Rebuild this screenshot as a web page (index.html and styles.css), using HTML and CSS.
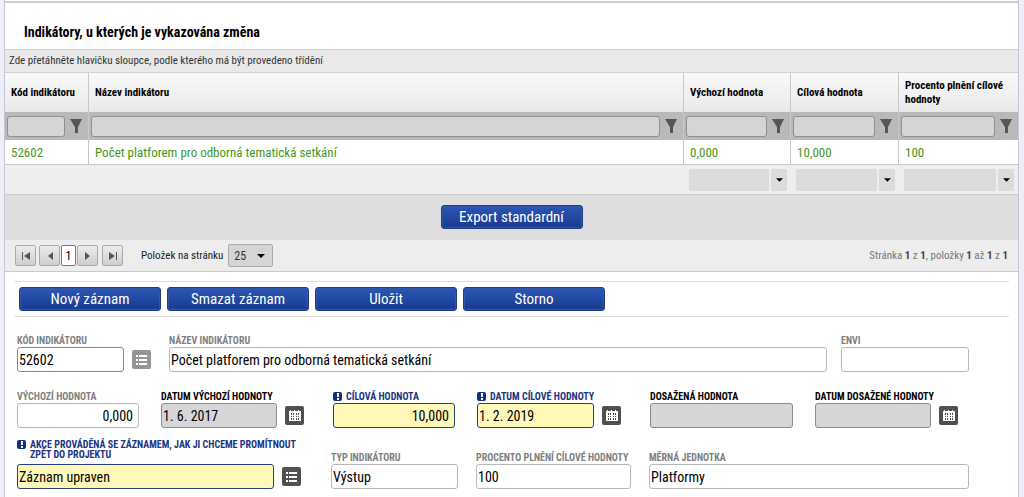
FILE: index.html
```html
<!DOCTYPE html>
<html lang="cs">
<head>
<meta charset="utf-8">
<meta name="viewport" content="width=device-width, initial-scale=1">
<title>Indikátory</title>
<link rel="stylesheet" href="styles.css">
</head>
<body>
<svg class="sprite" aria-hidden="true">
  <symbol id="funnel" viewBox="0 0 12 14"><path d="M0 0h12L8 8v6H5V8z"/></symbol>
  <symbol id="caret" viewBox="0 0 8 4"><path d="M0 0h8L4 4z"/></symbol>
  <symbol id="list" viewBox="0 0 19 19"><path d="M4 5h2v2H4zM4 9h2v2H4zM4 13h2v2H4zM7 5h8v2H7zM7 9h8v2H7zM7 13h8v2H7z"/></symbol>
  <symbol id="calendar" viewBox="0 0 19 19"><path fill-rule="evenodd" d="M4 5h1V4h1v1h3V4h1v1h3V4h1v1h2v10H4zM6 7v2h1V7zM8 7v2h1V7zM11 7v2h1V7zM13 7v2h1V7zM6 10v1h1v-1zM8 10v1h1v-1zM11 10v1h1v-1zM13 10v1h1v-1zM6 12v2h1v-2zM8 12v2h1v-2zM11 12v2h1v-2zM13 12v2h1v-2z"/></symbol>
  <symbol id="required" viewBox="0 0 9 9"><rect width="9" height="9" rx="2" fill="#142f80"/><path d="M4 1h2v4H4zM4 6h2v2H4z" fill="#fff"/></symbol>
</svg>
<main class="panel">
  <h1 class="title">Indikátory, u kterých je vykazována změna</h1>
  <div class="group-bar">Zde přetáhněte hlavičku sloupce, podle kterého má být provedeno třídění</div>
  <table class="grid">
    <colgroup><col class="col-code"><col><col class="col-base"><col class="col-target"><col class="col-percent"></colgroup>
    <thead>
      <tr class="head">
        <th scope="col">Kód indikátoru</th><th scope="col">Název indikátoru</th><th scope="col">Výchozí hodnota</th><th scope="col">Cílová hodnota</th><th scope="col">Procento plnění cílové hodnoty</th>
      </tr>
      <tr class="filters">
        <td><div class="filter"><input aria-label="Filtr: Kód indikátoru"><button aria-label="Filtrovat"><svg><use href="#funnel"/></svg></button></div></td>
        <td><div class="filter"><input aria-label="Filtr: Název indikátoru"><button aria-label="Filtrovat"><svg><use href="#funnel"/></svg></button></div></td>
        <td><div class="filter"><input aria-label="Filtr: Výchozí hodnota"><button aria-label="Filtrovat"><svg><use href="#funnel"/></svg></button></div></td>
        <td><div class="filter"><input aria-label="Filtr: Cílová hodnota"><button aria-label="Filtrovat"><svg><use href="#funnel"/></svg></button></div></td>
        <td><div class="filter"><input aria-label="Filtr: Procento plnění"><button aria-label="Filtrovat"><svg><use href="#funnel"/></svg></button></div></td>
      </tr>
    </thead>
    <tbody>
      <tr class="record"><td>52602</td><td>Počet platforem pro odborná tematická setkání</td><td>0,000</td><td>10,000</td><td>100</td></tr>
    </tbody>
    <tfoot>
      <tr class="totals">
        <td></td><td></td>
        <td><div class="total"><input readonly aria-label="Souhrn: Výchozí hodnota"><button aria-label="Vybrat souhrn"><svg><use href="#caret"/></svg></button></div></td>
        <td><div class="total"><input readonly aria-label="Souhrn: Cílová hodnota"><button aria-label="Vybrat souhrn"><svg><use href="#caret"/></svg></button></div></td>
        <td><div class="total"><input readonly aria-label="Souhrn: Procento plnění"><button aria-label="Vybrat souhrn"><svg><use href="#caret"/></svg></button></div></td>
      </tr>
    </tfoot>
  </table>
  <div class="export"><button class="btn">Export standardní</button></div>
  <nav class="pager" aria-label="Stránkování">
    <button class="page-btn" aria-label="První"><svg viewBox="0 0 10 10"><path d="M1 1h1v8H1zM9 1v8L3 5z"/></svg></button>
    <div class="page-group">
      <button class="page-btn" aria-label="Předchozí"><svg viewBox="0 0 10 10"><path d="M8 1v8L3 5z"/></svg></button>
      <button class="page-btn current">1</button>
      <button class="page-btn" aria-label="Další"><svg viewBox="0 0 10 10"><path d="M2 1v8l5-4z"/></svg></button>
    </div>
    <button class="page-btn" aria-label="Poslední"><svg viewBox="0 0 10 10"><path d="M1 1v8l6-4zM8 1h1v8H8z"/></svg></button>
    <label class="size-label" for="size">Položek na stránku</label>
    <div class="size"><select id="size"><option>25</option><option>50</option></select><svg><use href="#caret"/></svg></div>
    <p class="status">Stránka <b>1</b> z <b>1</b>, položky <b>1</b> až <b>1</b> z <b>1</b></p>
  </nav>
  <div class="actions">
    <button class="btn">Nový záznam</button><button class="btn">Smazat záznam</button><button class="btn">Uložit</button><button class="btn">Storno</button>
  </div>
  <form class="form">
    <div class="row row-name">
      <div class="field optional"><label for="code">KÓD INDIKÁTORU</label><div class="control"><input id="code" class="dark" value="52602"><button type="button" class="icon-btn muted" aria-label="Vybrat"><svg><use href="#list"/></svg></button></div></div>
      <div class="field optional"><label for="name">NÁZEV INDIKÁTORU</label><div class="control"><input id="name" value="Počet platforem pro odborná tematická setkání"></div></div>
      <div class="field optional"><label for="envi">ENVI</label><div class="control"><input id="envi"></div></div>
    </div>
    <div class="row row-values">
      <div class="field optional"><label for="base">VÝCHOZÍ HODNOTA</label><div class="control"><input id="base" class="number" value="0,000"></div></div>
      <div class="field locked date"><label for="base-date">DATUM VÝCHOZÍ HODNOTY</label><div class="control"><input id="base-date" readonly value="1. 6. 2017"><button type="button" class="icon-btn" aria-label="Kalendář"><svg><use href="#calendar"/></svg></button></div></div>
      <div class="field required"><label for="target"><svg><use href="#required"/></svg>CÍLOVÁ HODNOTA</label><div class="control"><input id="target" class="number" value="10,000"></div></div>
      <div class="field required date"><label for="target-date"><svg><use href="#required"/></svg>DATUM CÍLOVÉ HODNOTY</label><div class="control"><input id="target-date" value="1. 2. 2019"><button type="button" class="icon-btn" aria-label="Kalendář"><svg><use href="#calendar"/></svg></button></div></div>
      <div class="field locked"><label for="reached">DOSAŽENÁ HODNOTA</label><div class="control"><input id="reached" readonly></div></div>
      <div class="field locked date last"><label for="reached-date">DATUM DOSAŽENÉ HODNOTY</label><div class="control"><input id="reached-date" readonly><button type="button" class="icon-btn" aria-label="Kalendář"><svg><use href="#calendar"/></svg></button></div></div>
    </div>
    <div class="row row-action">
      <div class="field required"><label for="action"><svg><use href="#required"/></svg><span>AKCE PROVÁDĚNÁ SE ZÁZNAMEM, JAK JI CHCEME PROMÍTNOUT ZPĚT DO PROJEKTU</span></label><div class="control"><input id="action" value="Záznam upraven"><button type="button" class="icon-btn" aria-label="Vybrat"><svg><use href="#list"/></svg></button></div></div>
      <div class="field optional"><label for="type">TYP INDIKÁTORU</label><div class="control"><input id="type" value="Výstup"></div></div>
      <div class="field optional"><label for="percent">PROCENTO PLNĚNÍ CÍLOVÉ HODNOTY</label><div class="control"><input id="percent" value="100"></div></div>
      <div class="field optional"><label for="unit">MĚRNÁ JEDNOTKA</label><div class="control"><input id="unit" value="Platformy"></div></div>
    </div>
  </form>
</main>
</body>
</html>
```
FILE: styles.css
```css
* { box-sizing: border-box; }
body {
  margin: 0;
  background: #eceffb;
  color: #000;
  font-family: "Roboto Condensed", "Liberation Sans Narrow", Roboto, sans-serif;
  font-size: 11px;
}
button, input, select { font: inherit; color: inherit; margin: 0; padding: 0; min-width: 0; }
button { cursor: pointer; }
.sprite { display: none; }
svg { display: block; fill: currentColor; }

.panel {
  min-height: 100vh;
  margin: 0 5px 0 4px;
  background: #fff;
  border: solid #c4c6d0;
  border-width: 0 1px;
  padding-top: 1px;
}
.title {
  margin: 0;
  padding: 20px 19px 8px;
  border-top: 2px solid #ccced2;
  font-size: 14px;
  line-height: 18px;
}
.group-bar {
  padding: 0 4px;
  border: solid #d0d0d0;
  border-width: 1px 0;
  background: #e9e9e9;
  color: #333;
  line-height: 22px;
}

.grid { width: 100%; table-layout: fixed; border-spacing: 0; }
.col-code { width: 84px; }
.col-base { width: 107px; }
.col-target { width: 108px; }
.col-percent { width: 119px; }
.grid th, .grid td { padding: 0; text-align: left; }
.head th {
  height: 39px;
  border-right: 1px solid #c8c8c8;
  background: linear-gradient(#f9f9f9, #e9e9e9);
  line-height: 14px;
}
.filters td { height: 28px; background: #b9b9b9; border-right: 1px solid #c8c8c8; }
.filter { display: flex; align-items: center; gap: 5px; padding: 0 6px 0 2px; }
.filter input {
  flex: 1;
  height: 21px;
  border: 1px solid #909090;
  border-radius: 3px;
  background: #d5d5d5;
}
.filter button { border: 0; background: none; color: #555; }
.filter svg { width: 12px; height: 14px; }
.record td {
  height: 25px;
  border-right: 1px solid #c8c8c8;
  border-bottom: 1px solid #c8c8c8;
  color: #47951b;
  font-size: 13px;
}
.grid .head th, .grid .record td { padding: 0 5px 0 6px; }
.head th:last-child, .filters td:last-child, .record td:last-child { border-right: 0; }
.totals td { height: 30px; background: #eee; border-bottom: 1px solid #ccc; }
.total { display: flex; gap: 2px; padding: 0 4px 0 5px; }
.total input { flex: 1; height: 22px; border: 0; border-radius: 2px; background: #dbdbdb; }
.total button {
  display: grid;
  place-items: center;
  width: 16px;
  border: 0;
  border-radius: 2px;
  background: #dbdbdb;
}
.total svg { width: 7px; height: 4px; }

.btn {
  width: 142px;
  height: 24px;
  border: 1px solid #1b3c8f;
  border-radius: 3px;
  background: linear-gradient(#2b57b8, #1a3a8c);
  box-shadow: inset 0 0 0 1px #3156a8;
  color: #fff;
  font-size: 15px;
  line-height: 20px;
}
.export { display: flex; justify-content: center; padding: 10px 0 11px; background: #dedede; }

.pager {
  display: flex;
  align-items: center;
  height: 32px;
  padding: 0 10px;
  border-bottom: 1px solid #c9c9c9;
  background: #ededed;
}
.page-group { display: flex; gap: 1px; margin: 0 4px 0 3px; }
.page-btn {
  display: grid;
  place-items: center;
  width: 21px;
  height: 21px;
  border: 1px solid #aaa;
  border-radius: 2px;
  background: linear-gradient(#ececec, #cecece);
  color: #555;
}
.page-btn.current { width: 15px; border-color: #777; background: #fff; color: #000; font-size: 12px; }
.page-btn svg { width: 10px; height: 10px; }
.size-label { margin: 0 5px 0 18px; color: #222; }
.size { position: relative; }
.size select {
  appearance: none;
  width: 45px;
  height: 23px;
  padding: 0 5px;
  border: 1px solid #aaa;
  border-radius: 2px;
  background: #d5d5d5;
  color: #333;
  font-size: 12px;
}
.size svg { position: absolute; top: 10px; right: 8px; width: 8px; height: 4px; color: #000; pointer-events: none; }
.status { margin: 0 0 0 auto; color: #777; }
.status b { color: #444; }

.actions {
  display: flex;
  gap: 6px;
  margin: 9px 9px 0;
  padding: 5px;
  border: solid #e0e0e0;
  border-width: 1px 0;
}

.form { padding: 17px 49px 8px 12px; }
.row { display: grid; align-items: end; }
.row-name { grid-template-columns: 138fr 658fr 128fr; column-gap: 14px; }
.row-values { grid-template-columns: 122fr 150fr 122fr 151fr 143fr 154fr; column-gap: 22px; margin-top: 18px; }
.row-action { grid-template-columns: 296fr 127fr 155fr 320fr; column-gap: 18px; margin-top: 12px; }
.field { min-width: 0; }
.field label {
  display: flex;
  gap: 4px;
  height: 13px;
  font-size: 10px;
  font-weight: 700;
  line-height: 13px;
  white-space: nowrap;
}
.field label svg { flex: none; width: 9px; height: 9px; margin-top: 2px; }
.control { display: flex; align-items: center; gap: 8px; }
.control input {
  flex: 1;
  width: 100%;
  height: 25px;
  padding: 0 1px;
  border: 1px solid #b8b8b8;
  border-radius: 3px;
  background: #fff;
  font-size: 14px;
}
.control .dark { border-color: #888; }
.control .number { padding-right: 5px; text-align: right; }
.optional label { color: #7f7f7f; }
.locked input { border-color: #8c8c8c; background: #d6d6d6; }
.required label { color: #1a3484; }
.required input { border-color: #263f7d; background: #fff8b8; }
.date .control { padding-right: 7px; }
.date.last .control { padding-right: 11px; }
.icon-btn {
  flex: none;
  width: 19px;
  height: 19px;
  border: 0;
  border-radius: 2px;
  background: #505050;
  color: #fff;
}
.icon-btn.muted { background: #969696; }
.icon-btn svg { width: 19px; height: 19px; }
.row-name .field:first-child .control { padding-right: 4px; }
.row-action .field:first-child .control { padding-right: 12px; }
.row-action .field:first-child label {
  height: 24px;
  padding-bottom: 4px;
  line-height: 10px;
  white-space: normal;
}
.row-action .field:first-child label svg { margin-top: 0; }
```
